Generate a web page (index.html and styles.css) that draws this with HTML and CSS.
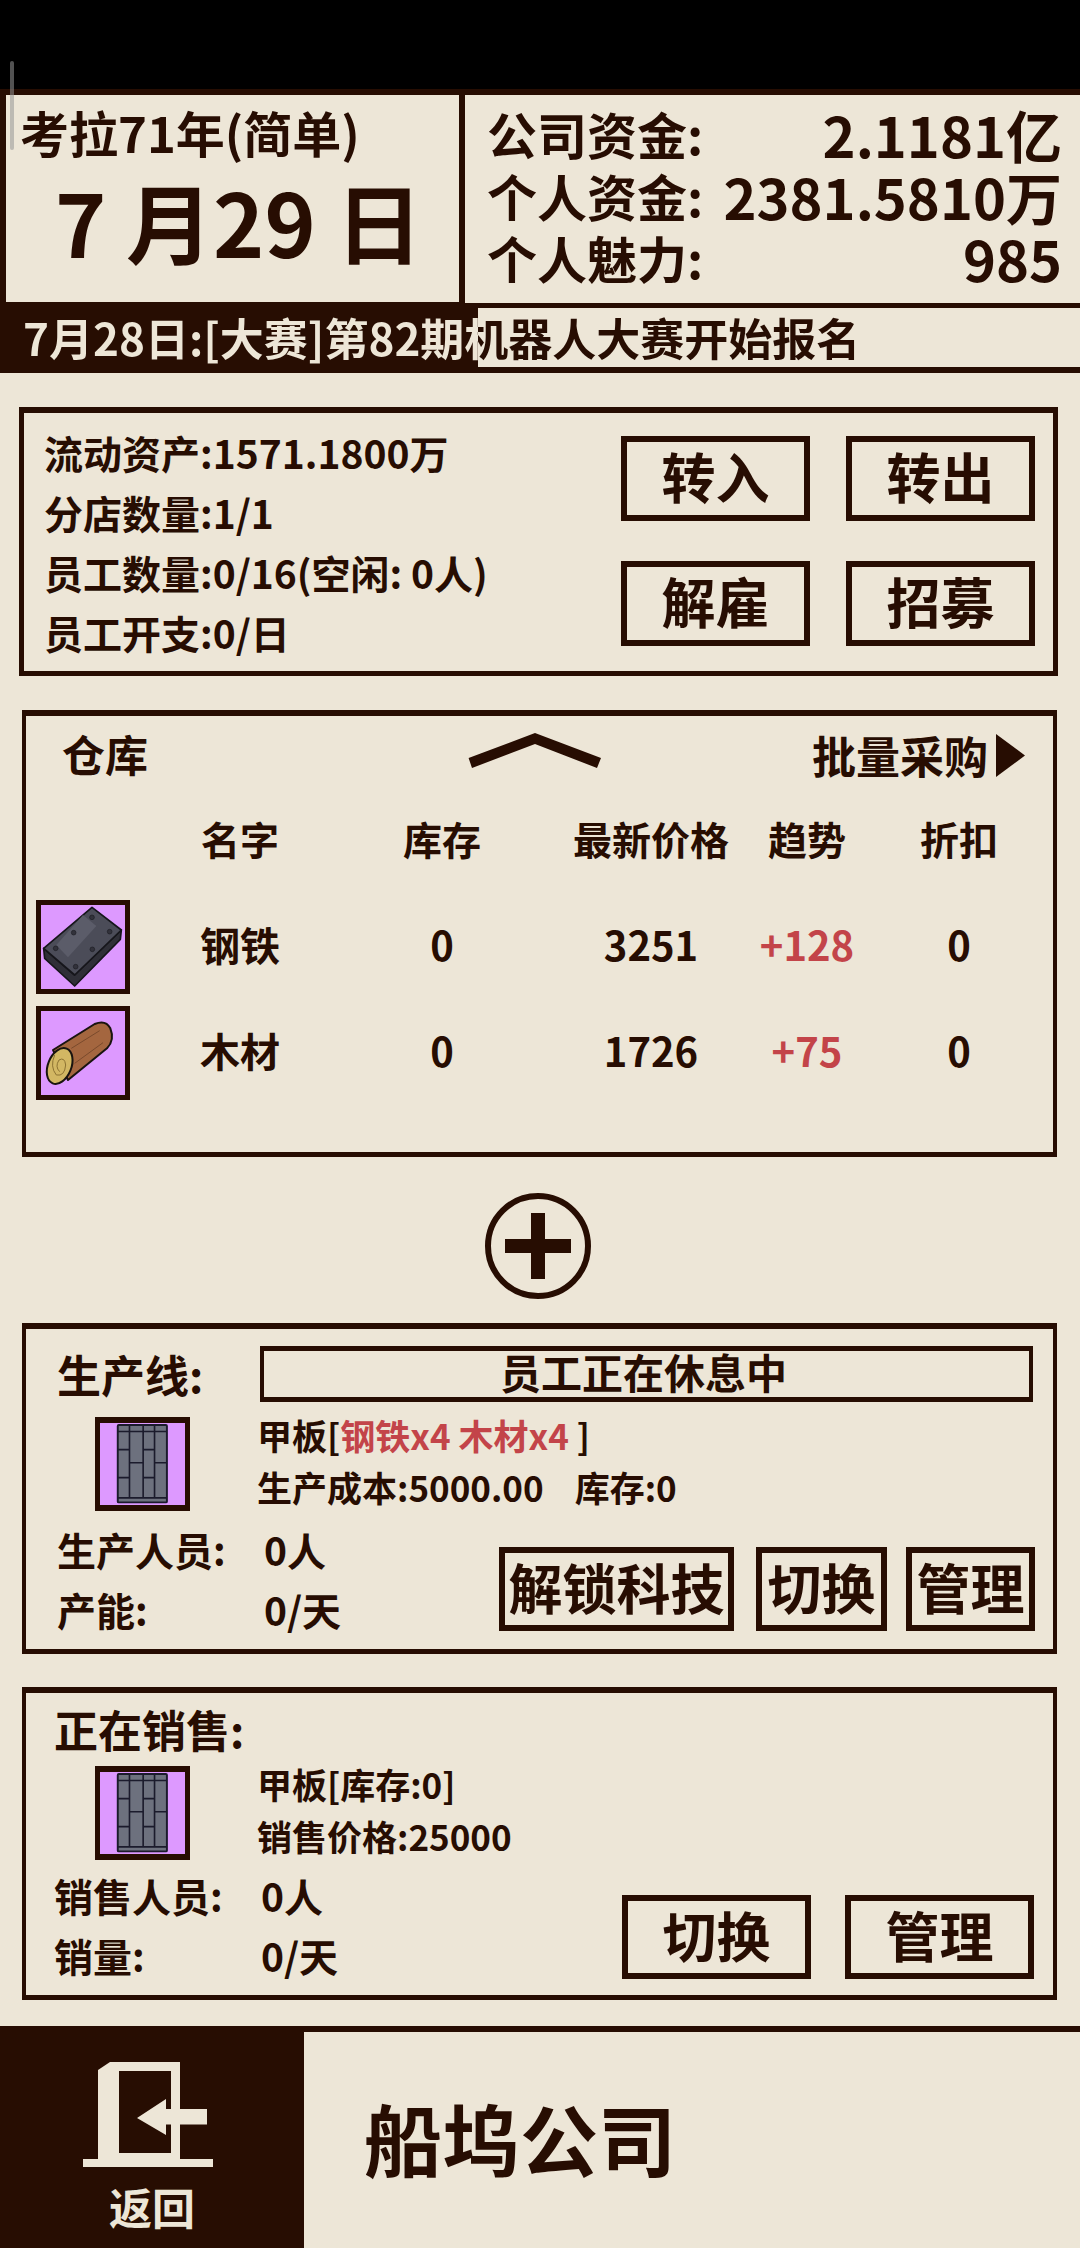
FILE: index.html
```html
<!DOCTYPE html>
<html lang="zh-CN">
<head>
<meta charset="utf-8">
<title>船坞公司</title>
<link rel="stylesheet" href="styles.css">
</head>
<body>
<div class="scroll-thumb"></div>
<div class="status-bar"></div>
<header class="header">
  <div class="date-box">
    <div class="year">考拉71年(简单)</div>
    <div class="date">7 月29 日</div>
  </div>
  <div class="funds-box">
    <div class="fund-row"><span>公司资金:</span><span class="fund-value">2.1181亿</span></div>
    <div class="fund-row"><span>个人资金:</span><span class="fund-value">2381.5810万</span></div>
    <div class="fund-row"><span>个人魅力:</span><span class="fund-value">985</span></div>
  </div>
</header>
<div class="news"><div class="news-track"><span class="news-text">7月28日:[大赛]第82期机器人大赛开始报名</span></div></div>

<section class="panel assets">
  <div class="asset-list">
    <div class="asset-row">流动资产:1571.1800万</div>
    <div class="asset-row">分店数量:1/1</div>
    <div class="asset-row">员工数量:0/16(空闲: 0人)</div>
    <div class="asset-row">员工开支:0/日</div>
  </div>
  <div class="asset-buttons">
    <div class="btn">转入</div><div class="btn">转出</div>
    <div class="btn">解雇</div><div class="btn">招募</div>
  </div>
</section>

<section class="panel stock">
  <div class="stock-head">
    <div class="stock-title">仓库</div>
    <svg class="chevron" viewBox="0 0 134 36"><polygon points="0.6,25 67,0 133,25 129,35 67,11 4,35"/></svg>
    <div class="bulk">批量采购<svg class="bulk-arrow" viewBox="0 0 29 43"><polygon points="0,0 29,21.500 0,43"/></svg></div>
  </div>
  <div class="stock-table">
    <div></div><div class="cell col-h">名字</div><div class="cell col-h">库存</div><div class="cell col-h">最新价格</div><div class="cell col-h">趋势</div><div class="cell col-h">折扣</div>

    <div class="icon-cell"><div class="icon-box">
      <svg viewBox="124 76 252 250">
        <polygon points="132,205 135,235 225,318 362,178 365,150 225,285" fill="#2f2f37" stroke="#16161b" stroke-width="5" stroke-linejoin="round"/>
        <polygon points="277,82 365,150 225,285 132,205" fill="#4b4c58" stroke="#16161b" stroke-width="5" stroke-linejoin="round"/>
        <polygon points="250,105 290,138 205,232 170,195" fill="#5b5c69"/>
        <g fill="#32323b" stroke="#1c1c22" stroke-width="2">
          <circle cx="168" cy="205" r="7"/><circle cx="222" cy="158" r="7"/><circle cx="277" cy="112" r="7"/>
          <circle cx="330" cy="155" r="7"/><circle cx="278" cy="208" r="7"/><circle cx="228" cy="260" r="7"/>
        </g>
      </svg>
    </div></div>
    <div class="cell">钢铁</div><div class="cell">0</div><div class="cell">3251</div><div class="cell up">+128</div><div class="cell">0</div>

    <div class="icon-cell"><div class="icon-box">
      <svg viewBox="124 394 252 250">
        <path d="M160 510 L285 432 Q318 418 332 445 Q346 480 322 505 L205 600 Z" fill="#a4663f" stroke="#191410" stroke-width="6" stroke-linejoin="round"/>
        <path d="M215 505 L300 452 M225 550 L310 488" stroke="#7a4a2c" stroke-width="3" fill="none"/>
        <ellipse cx="180" cy="558" rx="35" ry="56" transform="rotate(22 180 558)" fill="#d2b763" stroke="#191410" stroke-width="6"/>
        <path d="M180 575 Q165 560 178 540 Q195 530 198 555 Q195 590 170 585 Q150 560 165 525" stroke="#8c7232" stroke-width="3" fill="none"/>
      </svg>
    </div></div>
    <div class="cell">木材</div><div class="cell">0</div><div class="cell">1726</div><div class="cell up">+75</div><div class="cell">0</div>
  </div>
</section>

<div class="add-row">
  <svg class="add-icon" viewBox="0 0 106 106">
    <circle cx="53" cy="53" r="50" class="add-ring"/>
    <rect x="20" y="46" width="66" height="14" class="add-bar"/>
    <rect x="46" y="20" width="14" height="66" class="add-bar"/>
  </svg>
</div>

<section class="panel line">
  <div class="line-top">
    <div class="line-title">生产线:</div>
    <div class="line-status">员工正在休息中</div>
  </div>
  <div class="product">
    <div class="icon-box product-icon">
      <svg viewBox="123 66 250 252">
        <rect x="172" y="72" width="151" height="238" rx="3" fill="#6d717e" stroke="#1b1b2c" stroke-width="6"/>
        <path d="M172 92H323M172 296H323M208 72V296M250 72V296M285 72V296M172 148H208M250 148H285M208 188H250M285 188H323M172 234H208M250 234H285" stroke="#1b1b2c" stroke-width="5" fill="none"/>
      </svg>
    </div>
    <div class="product-text">
      <div class="product-row">甲板[<span class="up">钢铁x4 木材x4</span> ]</div>
      <div class="product-row">生产成本:5000.00<span class="stock-note">库存:0</span></div>
    </div>
  </div>
  <div class="line-bottom">
    <div class="staff">
      <div class="staff-row"><span class="staff-label">生产人员:</span><span>0人</span></div>
      <div class="staff-row"><span class="staff-label">产能:</span><span>0/天</span></div>
    </div>
    <div class="line-buttons">
      <div class="btn btn-tech">解锁科技</div>
      <div class="btn btn-swap">切换</div>
      <div class="btn btn-manage">管理</div>
    </div>
  </div>
</section>

<section class="panel sales">
  <div class="line-title sales-title">正在销售:</div>
  <div class="product sales-product">
    <div class="icon-box product-icon">
      <svg viewBox="123 66 250 252">
        <rect x="172" y="72" width="151" height="238" rx="3" fill="#6d717e" stroke="#1b1b2c" stroke-width="6"/>
        <path d="M172 92H323M172 296H323M208 72V296M250 72V296M285 72V296M172 148H208M250 148H285M208 188H250M285 188H323M172 234H208M250 234H285" stroke="#1b1b2c" stroke-width="5" fill="none"/>
      </svg>
    </div>
    <div class="product-text">
      <div class="product-row">甲板[库存:0]</div>
      <div class="product-row">销售价格:25000</div>
    </div>
  </div>
  <div class="line-bottom sales-bottom">
    <div class="staff">
      <div class="staff-row"><span class="staff-label">销售人员:</span><span>0人</span></div>
      <div class="staff-row"><span class="staff-label">销量:</span><span>0/天</span></div>
    </div>
    <div class="sales-buttons">
      <div class="btn">切换</div>
      <div class="btn">管理</div>
    </div>
  </div>
</section>

<footer class="footer">
  <div class="back">
    <svg class="back-icon" viewBox="0 0 130 106">
      <path class="back-shape" fill-rule="evenodd" d="M15 8L27 0H97V47H124V62.500H97V97H130V105H0V97H15ZM36 9V91H88V62.500H83V73L54 56 83 37V47H88V9Z"/>
    </svg>
    <div class="back-label">返回</div>
  </div>
  <div class="company">船坞公司</div>
</footer>
</body>
</html>
```

FILE: styles.css
```css
* { box-sizing: border-box; }
html, body { margin: 0; padding: 0; }
body {
  width: 1080px;
  height: 2248px;
  overflow: hidden;
  background: #ede6d7;
  color: #270d02;
  font-family: "Noto Sans CJK SC", "Noto Sans", sans-serif;
  font-weight: 700;
  position: relative;
}
.scroll-thumb {
  position: absolute;
  left: 10px;
  top: 61px;
  width: 4px;
  height: 89px;
  border-radius: 2px;
  background: rgba(150, 150, 150, 0.55);
}
.status-bar { height: 89px; background: #000; }

.header {
  height: 214px;
  background: #270d02;
  padding: 6px 0 0 6px;
  display: flex;
  gap: 6px;
}
.date-box {
  width: 453px;
  height: 207px;
  background: #ede6d7;
  padding: 5px 0 0 14px;
}
.year { font-size: 49px; line-height: 64px; white-space: nowrap; }
.date { font-size: 87px; line-height: 106px; margin: 3px 0 0 35px; white-space: pre; }
.funds-box {
  flex: 1;
  height: 208px;
  background: #ede6d7;
  padding: 10px 18px 0 22px;
}
.fund-row {
  display: flex;
  justify-content: space-between;
  height: 62px;
  line-height: 57px;
  font-size: 50px;
}
.fund-value { font-size: 56px; }

.news { height: 70px; background: #270d02; padding-top: 5px; }
.news-track {
  height: 59px;
  padding-left: 23px;
  background: linear-gradient(90deg, #270d02 478px, #ede6d7 478px);
}
.news-text {
  display: block;
  width: 1057px;
  font-size: 44px;
  line-height: 59px;
  white-space: nowrap;
  background: linear-gradient(90deg, #ede6d7 455px, #270d02 455px);
  -webkit-background-clip: text;
  background-clip: text;
  color: transparent;
}

.panel {
  border: 5px solid #270d02;
  border-top-width: 6px;
  margin-left: 22px;
  width: 1035px;
}
.assets {
  margin: 34px 0 0 19px;
  width: 1039px;
  height: 269px;
  display: flex;
  justify-content: space-between;
  padding: 12px 18px 0 20px;
}
.asset-row { height: 60px; line-height: 54px; font-size: 39px; white-space: nowrap; }
.asset-buttons {
  display: grid;
  grid-template-columns: 189px 189px;
  grid-auto-rows: 85px;
  column-gap: 36px;
  row-gap: 40px;
  margin-top: 11px;
}
.btn {
  border: 6px solid #270d02;
  display: flex;
  align-items: center;
  justify-content: center;
  font-size: 54px;
  line-height: 1;
  white-space: nowrap;
  padding-bottom: 5px;
}

.stock { margin-top: 34px; height: 447px; border-left-width: 4px; border-right-width: 4px; }
.stock-head {
  display: grid;
  grid-template-columns: 406px 344px auto;
  align-items: center;
  height: 78px;
  padding-left: 36px;
}
.stock-title { font-size: 43px; line-height: 60px; margin-bottom: 4px; }
.chevron { width: 134px; height: 36px; display: block; margin: -8px 0 0 0; fill: #270d02; }
.bulk { display: flex; align-items: center; gap: 8px; font-size: 44px; line-height: 60px; white-space: nowrap; }
.bulk-arrow { width: 29px; height: 43px; fill: #270d02; flex: none; }
.stock-table {
  display: grid;
  grid-template-columns: 134px 160px 244px 174px 138px 166px;
  grid-auto-rows: 94px;
  row-gap: 12px;
  align-items: center;
  justify-items: center;
  font-size: 40px;
}
.cell { padding-bottom: 6px; }
.col-h { font-size: 39px; }
.icon-cell { justify-self: start; padding-left: 10px; }
.icon-box {
  width: 94px;
  height: 94px;
  border: 5px solid #270d02;
  background: #dd99ff;
}
.icon-box svg { width: 100%; height: 100%; display: block; }
.up { color: #c34449; }

.add-row { height: 166px; display: flex; justify-content: center; padding: 12px 4px 0 0; align-items: center; }
.add-icon { width: 106px; height: 106px; }
.add-ring { fill: none; stroke: #270d02; stroke-width: 6; }
.add-bar { fill: #270d02; }

.line { height: 331px; padding: 17px 18px 0 31px; border-left-width: 4px; border-right-width: 4px; }
.line-top { display: flex; height: 56px; align-items: center; }
.line-title { font-size: 44px; line-height: 56px; width: 203px; white-space: nowrap; }
.line-status {
  flex: 1;
  height: 56px;
  margin-right: 2px;
  border: 4px solid #270d02;
  border-top-width: 5px;
  border-bottom-width: 5px;
  font-size: 41px;
  line-height: 40px;
  text-align: center;
  padding-right: 6px;
}
.product { display: flex; margin-top: 15px; padding-left: 38px; }
.product-icon { border-width: 6px 5px; flex: none; width: 95px; }
.product-text { margin: -5px 0 -5px 67px; }
.product-row { height: 52px; line-height: 46px; font-size: 35px; white-space: nowrap; }
.stock-note { margin-left: 31px; }
.line-bottom { display: flex; justify-content: space-between; margin-top: 11px; }
.staff-row { display: flex; height: 60px; line-height: 54px; font-size: 39px; white-space: nowrap; }
.staff-label { width: 207px; }
.line-buttons { display: flex; height: 84px; margin-top: 25px; }
.btn-tech { width: 235px; }
.btn-swap { width: 131px; margin-left: 22px; }
.btn-manage { width: 129px; margin-left: 19px; }

.sales { margin-top: 33px; height: 313px; padding: 6px 19px 0 28px; border-left-width: 4px; border-right-width: 4px; }
.sales-title { height: 66px; line-height: 60px; font-size: 44px; width: auto; }
.sales-product { margin-top: 1px; padding-left: 41px; }
.sales-bottom { margin-top: 8px; }
.sales-buttons { display: grid; grid-template-columns: 189px 189px; column-gap: 34px; grid-auto-rows: 84px; margin-top: 27px; }

.footer {
  margin-top: 26px;
  height: 222px;
  background: #270d02;
  padding-top: 6px;
  display: flex;
}
.back {
  width: 304px;
  margin-top: -6px;
  display: flex;
  flex-direction: column;
  align-items: center;
  padding-top: 36px;
  color: #ede6d7;
}
.back-icon { width: 130px; height: 106px; display: block; margin-left: -8px; }
.back-shape { fill: #ede6d7; }
.back-label { font-size: 43px; line-height: 52px; margin-top: 12px; }
.company {
  flex: 1;
  background: #ede6d7;
  padding-left: 60px;
  font-size: 78px;
  line-height: 210px;
  height: 216px;
}
```
